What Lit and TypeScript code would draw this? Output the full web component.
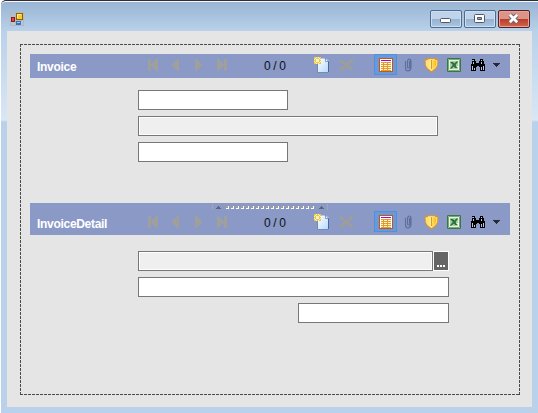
import { LitElement, html, css, svg } from "lit";
import { customElement, property } from "lit/decorators.js";

const icons: Record<string, unknown> = {
  first: svg`<path fill="#9f9f9e" d="M2 2h3v5h1v-1h1v-1h1v-1h1v-1h1v-1h2v12h-2v-1h-1v-1h-1v-1h-1v-1h-1v-1h-1v5h-3z"/>`,
  prev: svg`<path fill="#9f9f9e" d="M8 2h2v12h-2v-1h-1v-1h-1v-1h-1v-1h-1v-1h-1v-2h1v-1h1v-1h1v-1h1v-1h1z"/>`,
  next: svg`<path fill="#9f9f9e" d="M3 2h2v1h1v1h1v1h1v1h1v1h1v2h-1v1h-1v1h-1v1h-1v1h-1v1h-2z"/>`,
  last: svg`<path fill="#9f9f9e" d="M2 2h2v1h1v1h1v1h1v1h1v1h1v-5h3v12h-3v-5h-1v1h-1v1h-1v1h-1v1h-1v1h-2z"/>`,
  add: svg`<defs><linearGradient id="p" x2="1" y2="1"><stop stop-color="#fff"/><stop offset="1" stop-color="#b4d8fc"/></linearGradient></defs>
    <path d="M3.500 1.500h9l2 2v12h-11z" fill="url(#p)"/><path d="M3.500 7v8.500h11" fill="none" stroke="#7189bd"/><path d="M14.500 15v-11" stroke="#4965a3"/><path d="M11.500 1v3.500h3z" fill="#fff" stroke="#5878b4" stroke-width=".7"/>
    <path d="M0 0h7v7h-7z" fill="#fff3ad"/><path d="M0 0h2v1h1v-1h1v1h1v-1h2v2h-1v1h1v1h-1v1h1v2h-2v-1h-1v1h-1v-1h-1v1h-2v-2h1v-1h-1v-1h1v-1h-1z" fill="#e9c64e"/><path d="M2 2h3v3h-3zM1 1h1v1h-1zM5 1h1v1h-1zM1 5h1v1h-1zM5 5h1v1h-1z" fill="#fff6b7"/>`,
  remove: svg`<path d="M3 3l13 10M16 2l-13 12" stroke="#9d9d9c" stroke-width="2.900"/>`,
  grid: svg`<path d="M1.500 1.500h13v13h-13z" fill="#fff" stroke="#c4580c"/><path d="M3 3h10v1h-10z" fill="#b400c8"/><path d="M3 5h10v9h-10z" fill="#e39a2e"/><path d="M3 6h2v1h-2zM6 6h3v1h-3zM10 6h3v1h-3zM3 8h2v1h-2zM6 8h3v1h-3zM10 8h3v1h-3zM3 10h2v1h-2zM6 10h3v1h-3zM10 10h3v1h-3zM3 12h2v1h-2zM6 12h3v1h-3zM10 12h3v1h-3z" fill="#fff4c8"/>`,
  clip: svg`<path d="M4.500 4v7q0 3 2.500 3t3-3v-7q0-2-1.500-2t-2 2v6q0 1 1 1t1-1v-6" fill="none" stroke="#5c6f99" stroke-width="1.100"/><path d="M9.500 3v8q-.5 2-2 3" fill="none" stroke="#566b94" stroke-width=".7"/>`,
  shield: svg`<defs><linearGradient id="s"><stop stop-color="#ffd65b"/><stop offset=".5" stop-color="#fff39a"/><stop offset=".52" stop-color="#ffe45b"/><stop offset="1" stop-color="#f2ae27"/></linearGradient></defs><path d="M0 2.500q2.500.5 3.500-1.500q2 .8 4 0q2 .8 4 0q1 2 3.500 1.500q-1.400 2-1 5q-.4 4.500-6.500 7.800q-6.100-3.300-6.500-7.800q.4-3-1-5z" fill="#e7971b"/><path d="M2 4q1.700-.2 2.400-1.300q1.500.4 3.100-.2q1.600.6 3.100.2q.7 1.100 2.400 1.300q-.6 2-.3 4q-.8 3-5.200 5.500q-4.400-2.500-5.200-5.500q.3-2-.3-4z" fill="url(#s)" stroke="#ffe99c" stroke-width=".9"/><path d="M7.500 3v9" stroke="#d69018" stroke-width=".9"/>`,
  excel: svg`<path d="M.5 1.500h13v13h-13z" fill="#e6f2e2" stroke="#397844"/><path d="M1.500 2.500h11v11h-11z" fill="none" stroke="#78aa75"/><path d="M3 4h8v8h-8z" fill="#a9cea7"/><path d="M3 5h3l1.300 1.500 2-2h2l-2.800 3.500 2.500 3h-3l-1.200-1.500-2 2h-2l3-3.500z" fill="#28733a"/><path d="M9 9h3v3z" fill="#fff"/>`,
  find: svg`<path fill="#000" d="M3 2h3v2h1v2h3v-2h1v-2h3v2h1v3h1v7h-5v-4h-1v-1h-2v1h-1v4h-5v-7h1v-3h1z" transform="translate(-1 0)"/><path d="M3 3h1v1h-1zM11 3h1v1h-1zM3 5h1v2h-1zM11 5h1v2h-1zM2 9h1v4h-1zM11 10h1v3h-1zM13 9h1v4h-1zM4 11h1v2h-1z" fill="#bcc5dc"/>`,
};

@customElement("record-bar")
class RecordBar extends LitElement {
  @property() label = "";
  @property({ type: Boolean }) grip = false;
  static styles = css`
    :host { display: block; width: 480px; background: #8a99c6; }
    .row { display: flex; height: 24px; }
    .title { flex: none; width: 105px; padding-left: 7px; font: bold 12px/26px "Liberation Sans", Arial, sans-serif; letter-spacing: -.3px; color: #fff; }
    .tool { width: 23px; height: 24px; box-sizing: border-box; padding: 3px 0 0 4px; flex: none; }
    svg { display: block; width: 16px; height: 16px; overflow: visible; shape-rendering: crispEdges; }
    .clip svg, .shield svg, .remove svg, .add svg, .excel svg { shape-rendering: auto; }
    .count { flex: none; width: 46px; padding-left: 30px; font: 12px/24px "Liberation Sans", Arial, sans-serif; color: #101018; letter-spacing: -.35px; }
    .remove { width: 41px; }
    .grid { height: 21px; padding: 2px 0 0 3px; border: 1px solid #4d91e4; background: #6b98d8; }
    .menu { width: 20px; padding: 9px 0 0 4px; }
    .menu svg { width: 8px; height: 4px; }
    .grip { display: flex; height: 8px; justify-content: center; }
    .grip svg { width: 116px; height: 8px; }
  `;
  tool(name: string) {
    return html`<div class="tool ${name}"><svg viewBox="0 0 16 16">${icons[name]}</svg></div>`;
  }
  render() {
    return html`
      ${this.grip ? html`<div class="grip"><svg viewBox="0 0 116 8">
        <path d="M.5 1v6M115.500 1v6" stroke="#a0a5ba"/><path d="M4 6h5v-1h-1v-1h-1v-1h-1v1h-1v1h-1zM107 6h5v-1h-1v-1h-1v-1h-1v1h-1v1h-1z" fill="#606475"/>
        ${Array.from({ length: 18 }, (_, i) => svg`<path d="M${14 + i * 5} 3h3v3h-3z" fill="#fff"/><path d="M${14 + i * 5} 3h2v2h-2z" fill="#a39d91"/>`)}
      </svg></div>` : ""}
      <div class="row"><div class="title">${this.label}</div>
        ${["first", "prev", "next", "last"].map((n) => this.tool(n))}
        <div class="count">0 / 0</div>
        ${["add", "remove", "grid", "clip", "shield", "excel", "find"].map((n) => this.tool(n))}
        <div class="tool menu"><svg viewBox="0 0 8 4"><path d="M0 0h7v1h-1v1h-1v1h-1v1h-1v-1h-1v-1h-1v-1h-1z" fill="#262a36"/></svg></div>
      </div>`;
  }
}

@customElement("app-root")
class AppRoot extends LitElement {
  static styles = css`
    :host { display: block; width: 538px; height: 413px; overflow: hidden; background: #fff; }
    .window { box-sizing: border-box; height: 413px; margin-left: 1px; padding: 0 6px 6px; border-top: 1px solid #302c34; border-radius: 5px 0 0 0; box-shadow: inset 0 1px #f5faff;
      background: linear-gradient(#98b4d2, #b9d1ea 30px, transparent 30px), linear-gradient(#b9d1ea 30px, #d9e7f6 119px, #b9d1ea 121px); }
    .caption { height: 30px; display: flex; justify-content: space-between; }
    .logo { width: 14px; height: 14px; margin: 11px 0 0 3px; shape-rendering: crispEdges; }
    .buttons { display: flex; gap: 2px; margin: 9px 2px 0 0; }
    .button { box-sizing: border-box; width: 32px; height: 18px; border: 1px solid #536b8b; border-radius: 2px; box-shadow: inset 0 0 0 1px #cbdff2; background: linear-gradient(#bfd4eb 48%, #96b2d0 50%, #abc6e2); }
    .close { border-color: #5a2028; box-shadow: inset 0 0 0 1px #e4a49a; background: linear-gradient(#dc9486 48%, #b83b28 50%, #cf6750); }
    .button svg { display: block; width: 30px; height: 16px; }
    .client { box-sizing: border-box; height: 376px; padding: 13px; background: #e5e5e5; }
    .form { box-sizing: border-box; width: 500px; height: 351px; padding: 10px;
      background: repeating-linear-gradient(90deg, #4b4b4b 0 3px, transparent 3px 4px) top / 100% 1px no-repeat,
        repeating-linear-gradient(90deg, #4b4b4b 0 3px, transparent 3px 4px) bottom / 100% 1px no-repeat,
        repeating-linear-gradient(#4b4b4b 0 3px, transparent 3px 4px) left / 1px 100% no-repeat,
        repeating-linear-gradient(#4b4b4b 0 3px, transparent 3px 4px) right / 1px 100% no-repeat; }
    .fields { display: flex; flex-direction: column; gap: 6px; margin-left: 108px; padding-top: 12px; height: 113px; width: 311px; }
    .detail { padding-top: 16px; }
    .field { box-sizing: border-box; height: 20px; border: 1px solid #777779; background: #fff; flex: none; }
    .short { width: 150px; } .medium { width: 300px; }
    .right { width: 151px; align-self: flex-end; }
    .readonly { background: #efefef; box-shadow: inset 0 0 0 1px #fff; }
    .lookup { display: flex; height: 20px; }
    .lookup .field { width: 295px; }
    .more { box-sizing: border-box; width: 16px; height: 20px; border: 1px solid #fff; background: #666; display: flex; justify-content: center; align-items: flex-end; gap: 1px; padding-bottom: 3px; }
    .dot { width: 2px; height: 2px; background: #fff; }
  `;
  render() {
    return html`<div class="window">
      <div class="caption">
        <svg class="logo" viewBox="0 0 14 14"><path d="M.5 .5h5v5h-5zM.5 9.500h5v4h-5zM5.500 8.500h8v5h-8zM5.500.5h8v7h-8z" fill="none" stroke="#b7b7b7"/><path d="M6 1h7v7h-7z" fill="#8a6500"/><path d="M7 2h5v5h-5z" fill="#ffc928"/><path d="M7 2h4v1h-3v3h-1z" fill="#fff0a2"/><path d="M1 5h4v5h-4z" fill="#8d1917"/><path d="M2 6h2v3h-2z" fill="#df4938"/><path d="M6 9h5v4h-5z" fill="#386fc5"/><path d="M7 10h3v1h-3z" fill="#9bc6ff"/></svg>
        <div class="buttons">
          <div class="button"><svg viewBox="0 0 30 16"><rect x="9.500" y="7.500" width="10" height="4" rx="1" fill="#fff" stroke="#535666"/></svg></div>
          <div class="button"><svg viewBox="0 0 30 16"><rect x="9.500" y="3.500" width="10" height="8" rx="1" fill="#fff" stroke="#535666"/><path d="M12.500 6.500h4v2h-4z" fill="#91adc8" stroke="#535666"/></svg></div>
          <div class="button close"><svg viewBox="0 0 30 16"><path d="M11 4l7 7M18 4l-7 7" stroke="#686674" stroke-width="4.600"/><path d="M10.800 3.800l7.400 7.400M18.200 3.800l-7.400 7.400" stroke="#fff" stroke-width="2.700"/></svg></div>
        </div>
      </div>
      <div class="client"><div class="form">
        <record-bar label="Invoice"></record-bar>
        <div class="fields"><div class="field short"></div><div class="field medium readonly"></div><div class="field short"></div></div>
        <record-bar label="InvoiceDetail" grip></record-bar>
        <div class="fields detail"><div class="lookup"><div class="field readonly"></div><div class="more"><div class="dot"></div><div class="dot"></div><div class="dot"></div></div></div><div class="field"></div><div class="field right"></div></div>
      </div></div>
    </div>`;
  }
}
